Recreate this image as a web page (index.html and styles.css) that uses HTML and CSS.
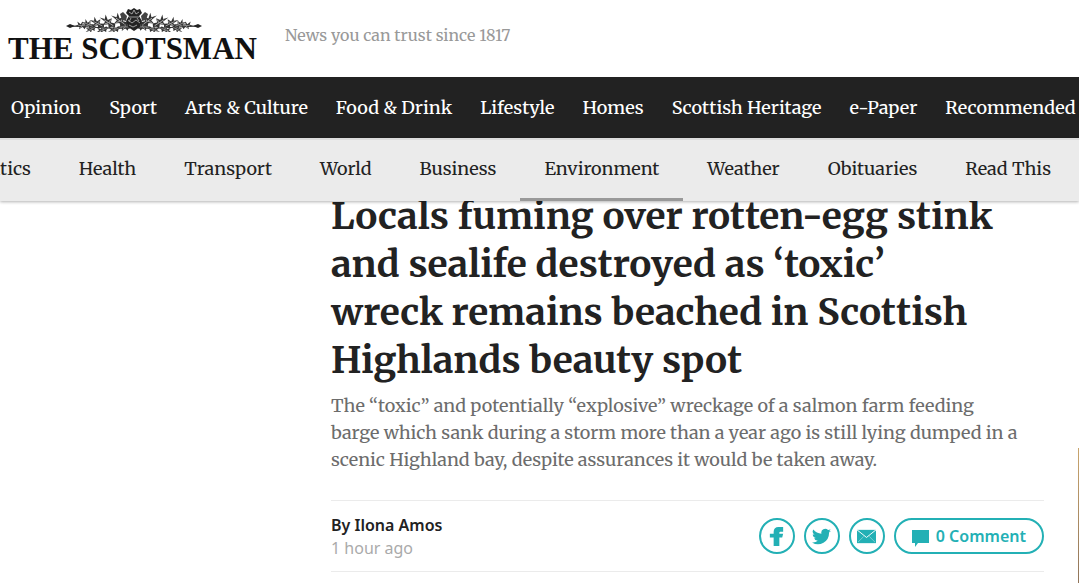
FILE: index.html
```
<!DOCTYPE html>
<html lang="en">
<head>
    <meta charset="UTF-8">
    <meta name="viewport" content="width=device-width, initial-scale=1.0">
    <title>Locals fuming over rotten-egg stink | The Scotsman</title>
    <link rel="stylesheet" href="styles.css">
</head>
<body>
    <header class="site-header">
        <div class="masthead">
            <a href="#" class="logo">
                <svg class="crest" viewBox="-4 0 140 24" aria-hidden="true">
                    <defs>
                        <g id="leaf">
                            <path d="M0 0L3-2L4-5L7-2L11-6L11-2L18-2L13 0L15 4L10 1L8 5L6 1L2 3Z" fill="#333"/>
                            <path d="M2 0L13-1M8-1L10-4M7 0L8 3" fill="none" stroke="#ccc" stroke-width=".7"/>
                        </g>
                        <g id="branch">
                            <path d="M64 20C48 21 28 19 3 18" fill="none" stroke="#222"/>
                            <path d="M0 18L4 16L9 18L4 20Z" fill="#222"/>
                            <use href="#leaf" transform="translate(22 18) rotate(188) scale(.75)"/>
                            <use href="#leaf" transform="translate(28 19) rotate(208) scale(.75)"/>
                            <use href="#leaf" transform="translate(30 19) rotate(160) scale(.65)"/>
                            <use href="#leaf" transform="translate(38 19) rotate(212) scale(.9)"/>
                            <use href="#leaf" transform="translate(42 20) rotate(165) scale(.7)"/>
                            <use href="#leaf" transform="translate(49 19) rotate(218) scale(1)"/>
                            <use href="#leaf" transform="translate(54 20) rotate(168) scale(.7)"/>
                            <use href="#leaf" transform="translate(61 18) rotate(220) scale(1.05)"/>
                            <use href="#leaf" transform="translate(65 19) rotate(185) scale(.8)"/>
                        </g>
                    </defs>
                    <use href="#branch"/>
                    <use href="#branch" transform="translate(136 0) scale(-1 1)"/>
                    <path d="M60 5L62 1L65 2L68 0L71 2L74 1L76 5L73 8L76 13L74 19L68 23L62 19L60 13L63 8Z" fill="#222"/>
                    <path d="M63 4L66 6L68 2L70 6L73 4M63 9H73M62 12L66 15L70 12L74 15M63 17L67 19L71 17M65 10L63 14M71 10L73 13" fill="none" stroke="#bbb" stroke-width=".8"/>
                    <path d="M54 6L57 4L61 8L60 13L56 12Z M82 6L79 4L75 8L76 13L80 12Z" fill="#444"/>
                </svg>
                <span class="logo-text">THE SCOTSMAN</span>
            </a>
            <p class="tagline">News you can trust since 1817</p>
        </div>

        <nav class="main-nav" aria-label="Main">
            <ul>
                <li><a href="#">Opinion</a></li>
                <li><a href="#">Sport</a></li>
                <li><a href="#">Arts &amp; Culture</a></li>
                <li><a href="#">Food &amp; Drink</a></li>
                <li><a href="#">Lifestyle</a></li>
                <li><a href="#">Homes</a></li>
                <li><a href="#">Scottish Heritage</a></li>
                <li><a href="#">e-Paper</a></li>
                <li><a href="#">Recommended</a></li>
            </ul>
        </nav>

        <nav class="sub-nav" aria-label="News">
            <ul>
                <li><a href="#">Politics</a></li>
                <li><a href="#">Health</a></li>
                <li><a href="#">Transport</a></li>
                <li><a href="#">World</a></li>
                <li><a href="#">Business</a></li>
                <li><a href="#" class="active">Environment</a></li>
                <li><a href="#">Weather</a></li>
                <li><a href="#">Obituaries</a></li>
                <li><a href="#">Read This</a></li>
            </ul>
        </nav>
    </header>

    <main class="page">
        <article class="article">
            <h1>Locals fuming over rotten-egg stink<br> and sealife destroyed as ‘toxic’<br> wreck remains beached in Scottish<br> Highlands beauty spot</h1>
            <p class="standfirst">The “toxic” and potentially “explosive” wreckage of a salmon farm feeding<br> barge which sank during a storm more than a year ago is still lying dumped in a<br> scenic Highland bay, despite assurances it would be taken away.</p>

            <div class="article-meta">
                <div class="byline">
                    <p class="author">By Ilona Amos</p>
                    <p class="time">1 hour ago</p>
                </div>
                <div class="share">
                    <a href="#" class="share-btn" aria-label="Share on Facebook">
                        <svg viewBox="0 0 20 20"><path d="M7 20V11H3V7H7V5C7 2 9 0 12 0H17V5H14Q13 5 13 6V7H17L16 11H13V20Z"/></svg>
                    </a>
                    <a href="#" class="share-btn" aria-label="Share on Twitter">
                        <svg viewBox="0 0 24 24"><path d="M24 4.6a10 10 0 0 1-2.8.8 5 5 0 0 0 2.2-2.7 10 10 0 0 1-3.1 1.2 4.9 4.9 0 0 0-8.4 4.5A14 14 0 0 1 1.7 3.1a4.9 4.9 0 0 0 1.5 6.6 5 5 0 0 1-2.2-.6 4.9 4.9 0 0 0 3.9 4.9 5 5 0 0 1-2.2.1 4.9 4.9 0 0 0 4.6 3.4A10 10 0 0 1 0 19.5a14 14 0 0 0 21.5-12.4A10 10 0 0 0 24 4.6Z"/></svg>
                    </a>
                    <a href="#" class="share-btn" aria-label="Share by email">
                        <svg viewBox="0 0 20 20"><path d="M0 3H20V17H0Z"/><path d="M0 3L10 11L20 3" class="flap"/><path d="M1 16L7 10M19 16L13 10" class="flap fold"/></svg>
                    </a>
                    <button type="button" class="comment-btn">
                        <svg viewBox="0 0 17 17" aria-hidden="true"><path d="M0 0H17V13H6L3 17V13H0Z"/></svg>
                        0 Comment
                    </button>
                </div>
            </div>
        </article>
        <aside class="side-picture"></aside>
    </main>
</body>
</html>
```
FILE: styles.css
```
:root {
    --dark-color: #222;
    --accent-color: #23b0b5;
    --line-color: #ebebeb;
    --serif: Merriweather, "DejaVu Serif Condensed", "DejaVu Serif", serif;
    --sans: "Noto Sans", "Open Sans", sans-serif;
}

* {
    margin: 0;
    padding: 0;
    box-sizing: border-box;
}

body {
    color: var(--dark-color);
    background-color: #fff;
    font-family: var(--serif);
    overflow-x: hidden;
}

a {
    color: inherit;
    text-decoration: none;
}

ul {
    display: flex;
    list-style: none;
    white-space: nowrap;
}

.site-header {
    position: sticky;
    top: 0;
    z-index: 1;
}

.masthead {
    display: flex;
    gap: 28px;
    height: 77px;
    padding: 8px 8px 0;
    background: #fff;
}

.logo {
    display: flex;
    flex-direction: column;
    align-items: center;
    color: #111;
}

.crest {
    width: 140px;
    height: 24px;
}

.logo-text {
    font: bold 31px/34px "Liberation Serif", serif;
}

.tagline {
    padding-top: 15px;
    color: #999;
    font-size: 16px;
    line-height: 24px;
}

.main-nav {
    height: 61px;
    padding: 0 11px;
    background-color: var(--dark-color);
    color: #fff;
}

.main-nav ul {
    gap: 28px;
}

.main-nav a {
    display: block;
    font-size: 18px;
    font-weight: 500;
    line-height: 61px;
}

.sub-nav {
    border-top: 2px solid #ddd;
    background-color: #ebebeb;
    box-shadow: 0 1px 3px rgba(0, 0, 0, 0.3);
}

.sub-nav ul {
    justify-content: flex-end;
    padding-right: 4px;
    overflow: hidden;
}

.sub-nav a {
    display: block;
    padding: 0 24px;
    border-bottom: 3px solid transparent;
    font-size: 18px;
    line-height: 58px;
}

.sub-nav .active {
    border-color: #999;
}

.page {
    display: grid;
    grid-template-columns: minmax(0, 713px) 1fr;
    gap: 34px;
    margin-top: -9px;
    padding-left: 331px;
}

.article {
    padding-bottom: 24px;
}

.article h1 {
    font-size: 37px;
    line-height: 48px;
    white-space: nowrap;
}

.standfirst {
    margin: 8px 0 27px;
    color: #6c6c6c;
    font-size: 18px;
    line-height: 27px;
    white-space: nowrap;
}

.article-meta {
    display: flex;
    justify-content: space-between;
    align-items: center;
    height: 72px;
    border-top: 1px solid var(--line-color);
    border-bottom: 1px solid var(--line-color);
    font-family: var(--sans);
    font-size: 16px;
    line-height: 23px;
}

.byline {
    padding-top: 2px;
}

.author {
    font-weight: 600;
}

.time {
    color: #aaa;
}

.share {
    display: flex;
    align-items: center;
    gap: 9px;
}

.share svg {
    fill: var(--accent-color);
}

.share-btn,
.comment-btn {
    display: flex;
    justify-content: center;
    align-items: center;
    height: 36px;
    border: 2px solid var(--accent-color);
    border-radius: 18px;
    background: #fff;
}

.share-btn {
    width: 36px;
}

.share-btn svg {
    width: 19px;
    height: 19px;
}

.share .flap {
    fill: none;
    stroke: #fff;
}

.share .fold {
    stroke-width: 0.4;
}

.comment-btn {
    gap: 7px;
    padding: 0 16px;
    color: var(--accent-color);
    font: 600 16px/23px var(--sans);
    cursor: pointer;
}

.comment-btn svg {
    width: 17px;
    height: 17px;
    margin-top: 4px;
}

.side-picture {
    margin-top: 256px;
    background: linear-gradient(#c9a56d, #8b7058);
}
```
